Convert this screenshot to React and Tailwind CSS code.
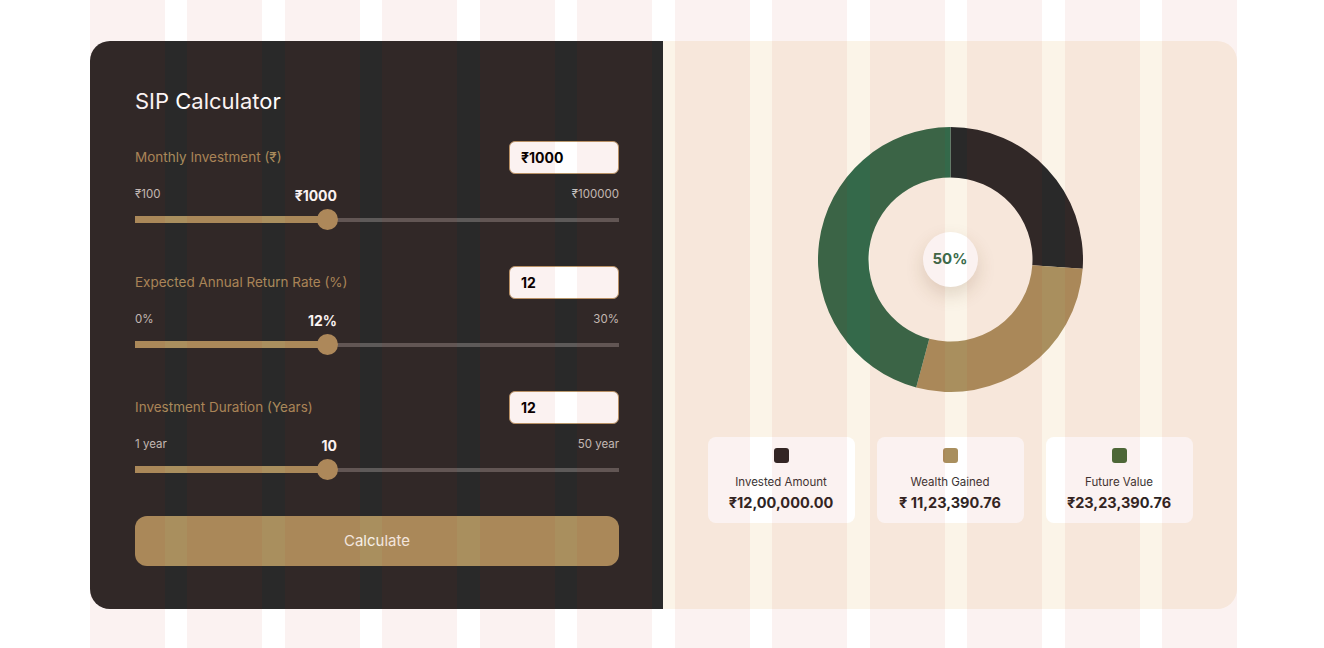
import React from "react";

const FONT = { fontFamily: "Inter, 'Noto Sans', sans-serif" };

function arcPath(cx, cy, rO, rI, a0, a1) {
  const rad = (a) => ((a - 90) * Math.PI) / 180;
  const p = (r, a) => [cx + r * Math.cos(rad(a)), cy + r * Math.sin(rad(a))];
  const large = a1 - a0 > 180 ? 1 : 0;
  const [x0, y0] = p(rO, a0);
  const [x1, y1] = p(rO, a1);
  const [x2, y2] = p(rI, a1);
  const [x3, y3] = p(rI, a0);
  return `M${x0} ${y0} A${rO} ${rO} 0 ${large} 1 ${x1} ${y1} L${x2} ${y2} A${rI} ${rI} 0 ${large} 0 ${x3} ${y3} Z`;
}

function Donut() {
  const c = 132.5;
  const segs = [
    { a0: 0, a1: 94, color: "#292929" },
    { a0: 94, a1: 195, color: "#a98f5e" },
    { a0: 195, a1: 360, color: "#34694a" },
  ];
  return (
    <div className="relative w-[265px] h-[265px]">
      <svg width="265" height="265" viewBox="0 0 265 265">
        {segs.map((s, i) => (
          <path key={i} d={arcPath(c, c, 132.5, 82, s.a0, s.a1 === 360 ? 359.999 : s.a1)} fill={s.color} />
        ))}
      </svg>
      <div className="absolute left-[105px] top-[105px] w-[55px] h-[55px] rounded-full bg-white flex items-center justify-center shadow-[0_8px_18px_rgba(110,70,40,0.18)]">
        <span className="text-[15px] font-bold text-[#3b6b4a]">50%</span>
      </div>
    </div>
  );
}

function Section({ label, value, min, max, current }) {
  return (
    <div className="h-[125px]">
      <div className="h-[33px] flex items-center justify-between">
        <span className="text-[13.5px] text-[#a98b5c]">{label}</span>
        <div className="w-[110px] h-[33px] rounded-[6px] border border-[#b8976a] bg-white flex items-center pl-[11px]">
          <span className="text-[14px] font-bold text-black">{value}</span>
        </div>
      </div>
      <div className="relative mt-[13px] h-[16px] flex items-center justify-between">
        <span className="text-[11.5px] text-[#c4c0bd]">{min}</span>
        <span className="absolute right-[282px] top-[1px] text-[14px] font-bold text-white leading-[16px]">{current}</span>
        <span className="text-[11.5px] text-[#c4c0bd]">{max}</span>
      </div>
      <div className="relative mt-[6px] h-[21px] flex items-center">
        <div className="absolute left-0 right-0 h-[4px] bg-[#5d5a59]" />
        <div className="absolute left-0 w-[192px] h-[7px] bg-[#a98f5e]" />
        <div className="absolute left-[181.5px] w-[21px] h-[21px] rounded-full bg-[#ad8f5f]" />
      </div>
    </div>
  );
}

function Legend({ color, label, value }) {
  return (
    <div className="w-[147px] h-[86px] rounded-[8px] bg-white flex flex-col items-center pt-[11px]">
      <div className={`w-[15px] h-[15px] rounded-[3px] ${color}`} />
      <div className="mt-[11px] text-[11.5px] leading-[16px] text-[#3a3433]">{label}</div>
      <div className="mt-[3px] text-[14.5px] leading-[20px] font-bold text-[#2c2524]">{value}</div>
    </div>
  );
}

export default function App() {
  return (
    <div className="relative w-full h-[648px] bg-white overflow-hidden" style={FONT}>
      <div className="pt-[41px] pl-[90px]">
        <div className="w-[1147px] h-[568px] grid grid-cols-[573px_574px]">
          <div className="bg-[#292929] rounded-l-[20px] pl-[45px] pr-[44px] pt-[45px]">
            <h1 className="text-[22px] leading-[30px] font-normal text-white">SIP Calculator</h1>
            <div className="mt-[25px]">
              <Section label="Monthly Investment (₹)" value="₹1000" min="₹100" max="₹100000" current="₹1000" />
              <Section label="Expected Annual Return Rate (%)" value="12" min="0%" max="30%" current="12%" />
              <Section label="Investment Duration (Years)" value="12" min="1 year" max="50 year" current="10" />
            </div>
            <button className="w-full h-[50px] rounded-[12px] bg-[#a98f5e] text-[15px] text-[#f7f1e8]">Calculate</button>
          </div>
          <div className="bg-[#fbf4e8] rounded-r-[20px] flex flex-col items-center pt-[86px]">
            <Donut />
            <div className="mt-[45px] flex gap-[22px]">
              <Legend color="bg-[#2b2626]" label="Invested Amount" value="₹12,00,000.00" />
              <Legend color="bg-[#a98f5e]" label="Wealth Gained" value="₹ 11,23,390.76" />
              <Legend color="bg-[#476c3a]" label="Future Value" value="₹23,23,390.76" />
            </div>
          </div>
        </div>
      </div>
      <div className="pointer-events-none absolute top-0 bottom-0 left-[90px] w-[1147px] grid grid-cols-12 gap-x-[22.5px]">
        {Array.from({ length: 12 }).map((_, i) => (
          <div key={i} className="bg-[rgba(194,40,9,0.058)]" />
        ))}
      </div>
    </div>
  );
}
